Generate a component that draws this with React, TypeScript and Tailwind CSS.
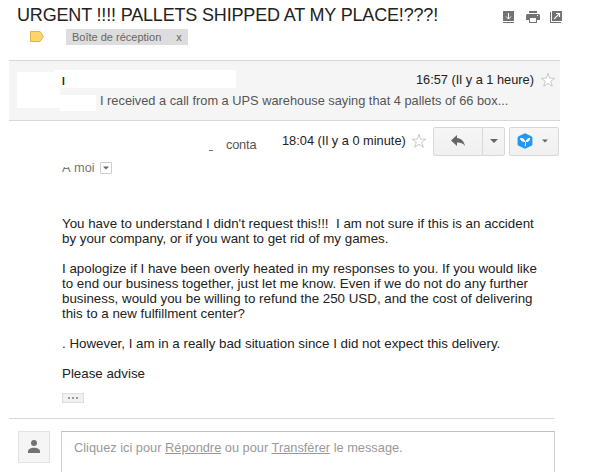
import { ReactNode } from "react";

const bodyLine = "block whitespace-pre";

function Caret({ className = "" }: { className?: string }) {
  return (
    <svg className={className} width="8" height="4" viewBox="0 0 8 4">
      <path d="M0 0h8L4 4z" fill="currentColor" />
    </svg>
  );
}

function Star() {
  return (
    <svg width="16" height="16" viewBox="0 0 16 16" fill="#fff" stroke="#c9c9c9" strokeWidth="1">
      <path d="M8 1.3l1.7 4.9h5.2l-4.2 3.1 1.6 5-4.3-3-4.3 3 1.6-5L1.1 6.2h5.2z" />
    </svg>
  );
}

function ToolbarButton({ children, className = "" }: { children: ReactNode; className?: string }) {
  return (
    <button
      className={`flex h-[29px] items-center border border-[#d8d8d8] bg-linear-to-b from-[#f6f6f6] to-[#f0f0f0] pb-px text-[#666] ${className}`}
    >
      {children}
    </button>
  );
}

function ThreadHeader() {
  return (
    <header className="flex h-[60px] justify-between pl-[17px] pr-[48px]">
      <div>
        <h1 className="h-[29px] whitespace-nowrap pt-[3px] text-[18px] leading-6 tracking-[-0.17px] text-[#222]">
          URGENT !!!! PALLETS SHIPPED AT MY PLACE!???!
        </h1>
        <div className="flex pl-[13px]">
          <svg className="mt-[2px]" width="14" height="11" viewBox="0 0 14 11">
            <path d="M.5.5h9.6l3.2 5-3.2 5H.5z" fill="#fdd56b" stroke="#dcb54d" />
          </svg>
          <div className="ml-[22px] flex h-4 w-[122px] items-center bg-[#ddd] pl-[6px] text-[11px] text-[#666]">
            <span>Boîte de réception</span>
            <span className="ml-[15px]">x</span>
          </div>
        </div>
      </div>
      <div className="mt-[11px] flex h-3 text-[#737373]">
        <svg width="11" height="12" viewBox="0 0 11 12">
          <path d="M0 0h11v10H0zM0 11h11v1H0z" fill="currentColor" />
          <path d="M5.5 2v6M3 5.5l2.5 2.5L8 5.5" fill="none" stroke="#fff" />
        </svg>
        <svg className="ml-3" width="14" height="12" viewBox="0 0 14 12">
          <path d="M3 0h8v2H3zM1 3h12l1 1v5h-3v3H3V9H0V4z" fill="currentColor" />
          <path d="M4 7h6v4H4zM11 4h1v1h-1z" fill="#fff" />
        </svg>
        <svg className="ml-[10px]" width="12" height="12" viewBox="0 0 12 12">
          <path d="M2 0h10v10H2zM0 1h1v10h10v1H0z" fill="currentColor" />
          <path d="M4.200 7.800l5-5M6 2.500h3.500V6" fill="none" stroke="#fff" strokeWidth="1.200" />
        </svg>
      </div>
    </header>
  );
}

function CollapsedMessage() {
  return (
    <section className="relative ml-[9px] h-[61px] w-[551px] border-y border-[#d8d8d8] bg-[#f5f5f5]">
      {/* hidden sender details */}
      <div className="absolute left-[8px] top-[11px] h-9 w-[43px] bg-white" />
      <div className="absolute left-[45px] top-[9px] h-[18px] w-[182px] bg-white" />
      <div className="absolute left-[51px] top-[34px] h-4 w-9 bg-white" />
      <b className="absolute left-[53px] top-[15px] text-[10px] leading-3 text-[#222]">I</b>
      <div className="flex justify-end pr-1 pt-[11px]">
        <span className="mr-[6px] text-[12.8px] leading-4 text-[#222]">16:57 (Il y a 1 heure)</span>
        <Star />
      </div>
      <p className="ml-[91px] mt-[5px] whitespace-nowrap text-[12.8px] leading-4 text-[#555]">
        I received a call from a UPS warehouse saying that 4 pallets of 66 box...
      </p>
    </section>
  );
}

function MessageHeader() {
  return (
    <div className="h-[95px]">
      <div className="flex pt-[6px]">
        <div className="ml-[209px] mt-[23px] h-px w-1 bg-[#777]" />
        <span className="ml-[13px] mt-[10px] w-[30px] whitespace-nowrap text-[12.8px] leading-4 tracking-[-0.2px] text-[#555]">
          conta
        </span>
        <span className="ml-[26px] mt-[6px] w-[123px] whitespace-nowrap text-[12.8px] leading-4 text-[#222]">
          18:04 (Il y a 0 minute)
        </span>
        <div className="ml-[6px] mt-[6px]">
          <Star />
        </div>
        <ToolbarButton className="ml-[6px] w-[50px] justify-center rounded-l-[2px]">
          <svg width="14" height="12" viewBox="0 0 14 12">
            <path d="M6 0v3c4 .3 7 3 8 8-2-2.600-4.500-3.500-8-3.400V11L0 5.400z" fill="currentColor" />
          </svg>
        </ToolbarButton>
        <ToolbarButton className="-ml-px w-[23px] justify-center rounded-r-[2px]">
          <Caret />
        </ToolbarButton>
        <ToolbarButton className="ml-1 w-[50px] rounded-[2px] pl-[7px]">
          <svg width="16" height="16" viewBox="0 0 16 16">
            <path d="M8 .3l6.400 3q1 .5 1 1.500v6.400q0 1-1 1.500L8 15.700l-6.400-3q-1-.5-1-1.500V4.800q0-1 1-1.500z" fill="#2196f3" />
            <path d="M3 5c3-.3 5 1 5.200 4C5.400 9.200 3.400 8 3 5zM13.200 4.800c.1 2.800-1.400 4.200-4.300 4.300 0-2.700 1.600-4.200 4.300-4.300z" fill="#fff" />
            <path d="M8.400 8.500c.3 1.500.2 3-.2 4.800" fill="none" stroke="#fff" strokeWidth=".9" />
          </svg>
          <Caret className="mb-px ml-[9px] w-[6px]" />
        </ToolbarButton>
      </div>
      <div className="ml-[62px] mt-1 flex text-[12.8px] leading-4 text-[#777]">
        <div className="relative">
          À moi
          <div className="absolute left-0 top-0 h-[7px] w-[10px] bg-white" />
        </div>
        <div className="ml-[5px] mt-[2px] flex h-3 w-3 items-center justify-center rounded-[1px] border border-[#ccc] text-[#666]">
          <Caret className="w-[6px]" />
        </div>
      </div>
    </div>
  );
}

function MessageBody() {
  return (
    <div className="ml-[62px] h-[202px] text-[13.333px] leading-[15px] text-[#222]">
      <p>
        <span className={bodyLine}>{"You have to understand I didn't request this!!!  I am not sure if this is an accident"}</span>
        <span className={bodyLine}>by your company, or if you want to get rid of my games.</span>
      </p>
      <p className="mt-[15px]">
        <span className={bodyLine}>I apologize if I have been overly heated in my responses to you. If you would like</span>
        <span className={bodyLine}>to end our business together, just let me know. Even if we do not do any further</span>
        <span className={bodyLine}>business, would you be willing to refund the 250 USD, and the cost of delivering</span>
        <span className={bodyLine}>this to a new fulfillment center?</span>
      </p>
      <p className="mt-[15px]">. However, I am in a really bad situation since I did not expect this delivery.</p>
      <p className="mt-[15px]">Please advise</p>
      <div className="mt-3 flex h-[10px] w-[22px] items-center justify-center gap-[2px] border border-[#ddd] bg-[#f1f1f1]">
        <i className="size-[2px] bg-[#999]" />
        <i className="size-[2px] bg-[#999]" />
        <i className="size-[2px] bg-[#999]" />
      </div>
    </div>
  );
}

function ReplyBox() {
  return (
    <footer className="ml-[9px] flex w-[546px] border-t border-[#d8d8d8] pl-[9px] pt-3">
      <div className="flex size-8 items-center justify-center border border-[#e2e2e2] bg-[#f5f5f5]">
        <svg width="12" height="14" viewBox="0 0 12 14" fill="#737373">
          <circle cx="6" cy="3" r="3" />
          <path d="M0 13v-1.500C0 6.500 12 6.500 12 11.500V13z" />
        </svg>
      </div>
      <div className="ml-[11px] h-[41px] flex-1 border border-b-0 border-[#d0d0d0] border-t-[#bdbdbd] pl-3 pt-2 text-[12.8px] leading-4 text-[#999]">
        Cliquez ici pour <u>Répondre</u> ou pour <u>Transférer</u> le message.
      </div>
    </footer>
  );
}

export default function App() {
  return (
    <main className="h-[472px] w-[610px] overflow-hidden bg-white font-['Liberation_Sans',Arial,sans-serif]">
      <ThreadHeader />
      <CollapsedMessage />
      <MessageHeader />
      <MessageBody />
      <ReplyBox />
    </main>
  );
}
